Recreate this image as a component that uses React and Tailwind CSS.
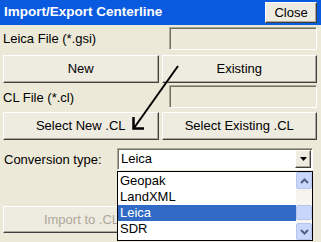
import React from 'react'

const raised =
  'border border-t-white border-l-white border-r-[#404040] border-b-[#404040] shadow-[inset_-1px_-1px_0_#ACA899] bg-[#EEEBE1]'
const sunken =
  'border border-t-[#ACA899] border-l-[#ACA899] border-r-white border-b-white shadow-[inset_1px_1px_0_#716F64]'

function Chevron({ up }) {
  return (
    <svg width="9" height="6" viewBox="0 0 9 6">
      <path
        d={up ? 'M1 5 L4.5 1.5 L8 5' : 'M1 1 L4.5 4.5 L8 1'}
        fill="none"
        stroke="#4D6185"
        strokeWidth="2"
      />
    </svg>
  )
}

export default function App() {
  return (
    <div className="relative w-[321px] h-[242px] overflow-hidden bg-[#ECE9D8] font-['Liberation_Sans',Arial,sans-serif] text-[13px] text-black">
      {/* title bar */}
      <div className="flex h-[25px] items-center justify-between bg-[#0A5AE0] pl-[4px] pr-[4px]">
        <span className="text-[13.5px] font-bold text-white">Import/Export Centerline</span>
        <div className={`${raised} flex h-[21px] w-[52px] items-center justify-center`}>Close</div>
      </div>

      {/* Leica row */}
      <div className="grid grid-cols-2 pt-[2px]">
        <div className="flex h-[23px] items-center pl-[3px]">Leica File (*.gsi)</div>
        <div className={`${sunken} ml-[8px] mr-[4px] h-[23px]`} />
      </div>

      <div className="grid grid-cols-2 gap-[3px] pl-[3px] pr-[4px] pt-[5px]">
        <div className={`${raised} flex h-[28px] items-center justify-center`}>New</div>
        <div className={`${raised} flex h-[28px] items-center justify-center`}>Existing</div>
      </div>

      {/* CL row */}
      <div className="grid grid-cols-2 pt-[2px]">
        <div className="flex h-[23px] items-center pl-[3px] pt-[3px]">CL File (*.cl)</div>
        <div className={`${sunken} ml-[8px] mr-[4px] h-[23px]`} />
      </div>

      <div className="grid grid-cols-2 gap-[3px] pl-[3px] pr-[4px] pt-[4px]">
        <div className={`${raised} flex h-[28px] items-center justify-center`}>Select New .CL</div>
        <div className={`${raised} flex h-[28px] items-center justify-center`}>Select Existing .CL</div>
      </div>

      {/* conversion type */}
      <div className="flex items-center pt-[8px] pr-[8px]">
        <div className="w-[117px] pl-[4px] pt-[2px]">Conversion type:</div>
        <div className={`${sunken} flex h-[22px] flex-1 items-center bg-white pl-[3px]`}>
          <span className="flex-1">Leica</span>
          <div className={`${raised} mr-[1px] flex h-[18px] w-[16px] items-center justify-center`}>
            <svg width="7" height="4" viewBox="0 0 7 4">
              <path d="M0 0 H7 L3.5 4 Z" fill="black" />
            </svg>
          </div>
        </div>
      </div>

      <div className="grid grid-cols-2 pl-[3px] pr-[4px] pt-[36px]">
        <div className={`${raised} flex h-[27px] items-center justify-center text-[#ACA899]`}>Import to .CL</div>
      </div>

      {/* open dropdown list */}
      <div className="absolute left-[117px] top-[171px] flex h-[70px] w-[196px] border border-black bg-white">
        <div className="flex-1 pt-[1px]">
          <div className="flex h-[16px] items-center pl-[2px]">Geopak</div>
          <div className="flex h-[16px] items-center pl-[2px]">LandXML</div>
          <div className="flex h-[16px] items-center bg-[#316AC5] pl-[2px] text-white">Leica</div>
          <div className="flex h-[16px] items-center pl-[2px]">SDR</div>
        </div>
        <div className="flex w-[16px] flex-col bg-[#F5F4EF]">
          <div className="flex h-[17px] items-center justify-center rounded-[2px] border border-[#B4C6F0] bg-[#C8D7FB]">
            <Chevron up />
          </div>
          <div className="flex-1 pt-[16px]">
            <div className="h-[15px] rounded-[2px] border border-[#B4C6F0] bg-[#C8D7FB]" />
          </div>
          <div className="flex h-[17px] items-center justify-center rounded-[2px] border border-[#B4C6F0] bg-[#C8D7FB]">
            <Chevron />
          </div>
        </div>
      </div>

      {/* annotation arrow */}
      <svg className="pointer-events-none absolute left-0 top-0" width="321" height="242">
        <path d="M178 66 L134 128" stroke="black" strokeWidth="2" fill="none" />
        <path d="M133.5 117 V128.5 H144" stroke="black" strokeWidth="2.5" fill="none" />
      </svg>
    </div>
  )
}
